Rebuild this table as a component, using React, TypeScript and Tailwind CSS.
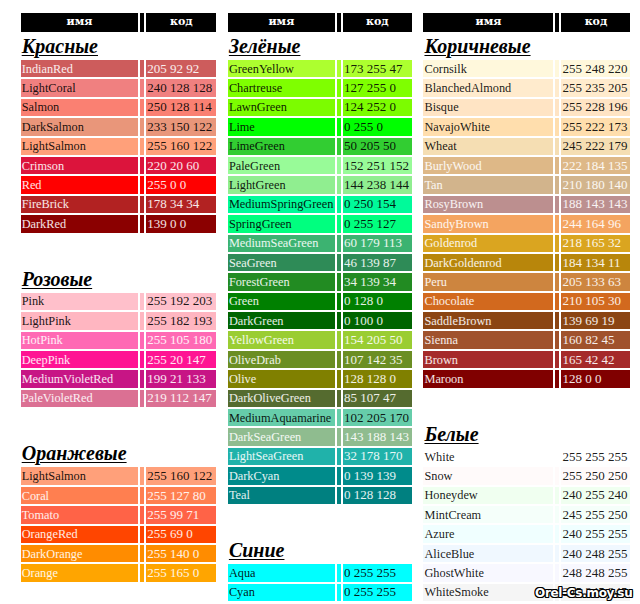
import React from "react";

type Row = [string, string, string, boolean]; // name, code, bg, lightText

const reds: Row[] = [
  ["IndianRed", "205 92 92", "rgb(205,92,92)", true],
  ["LightCoral", "240 128 128", "rgb(240,128,128)", false],
  ["Salmon", "250 128 114", "rgb(250,128,114)", false],
  ["DarkSalmon", "233 150 122", "rgb(233,150,122)", false],
  ["LightSalmon", "255 160 122", "rgb(255,160,122)", false],
  ["Crimson", "220 20 60", "rgb(220,20,60)", true],
  ["Red", "255 0 0", "rgb(255,0,0)", true],
  ["FireBrick", "178 34 34", "rgb(178,34,34)", true],
  ["DarkRed", "139 0 0", "rgb(139,0,0)", true],
];

const pinks: Row[] = [
  ["Pink", "255 192 203", "rgb(255,192,203)", false],
  ["LightPink", "255 182 193", "rgb(255,182,193)", false],
  ["HotPink", "255 105 180", "rgb(255,105,180)", true],
  ["DeepPink", "255 20 147", "rgb(255,20,147)", true],
  ["MediumVioletRed", "199 21 133", "rgb(199,21,133)", true],
  ["PaleVioletRed", "219 112 147", "rgb(219,112,147)", true],
];

const oranges: Row[] = [
  ["LightSalmon", "255 160 122", "rgb(255,160,122)", false],
  ["Coral", "255 127 80", "rgb(255,127,80)", true],
  ["Tomato", "255 99 71", "rgb(255,99,71)", true],
  ["OrangeRed", "255 69 0", "rgb(255,69,0)", true],
  ["DarkOrange", "255 140 0", "rgb(255,140,0)", true],
  ["Orange", "255 165 0", "rgb(255,165,0)", true],
];

const greens: Row[] = [
  ["GreenYellow", "173 255 47", "rgb(173,255,47)", false],
  ["Chartreuse", "127 255 0", "rgb(127,255,0)", false],
  ["LawnGreen", "124 252 0", "rgb(124,252,0)", false],
  ["Lime", "0 255 0", "rgb(0,255,0)", false],
  ["LimeGreen", "50 205 50", "rgb(50,205,50)", false],
  ["PaleGreen", "152 251 152", "rgb(152,251,152)", false],
  ["LightGreen", "144 238 144", "rgb(144,238,144)", false],
  ["MediumSpringGreen", "0 250 154", "rgb(0,250,154)", false],
  ["SpringGreen", "0 255 127", "rgb(0,255,127)", false],
  ["MediumSeaGreen", "60 179 113", "rgb(60,179,113)", true],
  ["SeaGreen", "46 139 87", "rgb(46,139,87)", true],
  ["ForestGreen", "34 139 34", "rgb(34,139,34)", true],
  ["Green", "0 128 0", "rgb(0,128,0)", true],
  ["DarkGreen", "0 100 0", "rgb(0,100,0)", true],
  ["YellowGreen", "154 205 50", "rgb(154,205,50)", true],
  ["OliveDrab", "107 142 35", "rgb(107,142,35)", true],
  ["Olive", "128 128 0", "rgb(128,128,0)", true],
  ["DarkOliveGreen", "85 107 47", "rgb(85,107,47)", true],
  ["MediumAquamarine", "102 205 170", "rgb(102,205,170)", false],
  ["DarkSeaGreen", "143 188 143", "rgb(143,188,143)", true],
  ["LightSeaGreen", "32 178 170", "rgb(32,178,170)", true],
  ["DarkCyan", "0 139 139", "rgb(0,139,139)", true],
  ["Teal", "0 128 128", "rgb(0,128,128)", true],
];

const blues: Row[] = [
  ["Aqua", "0 255 255", "rgb(0,255,255)", false],
  ["Cyan", "0 255 255", "rgb(0,255,255)", false],
];

const browns: Row[] = [
  ["Cornsilk", "255 248 220", "rgb(255,248,220)", false],
  ["BlanchedAlmond", "255 235 205", "rgb(255,235,205)", false],
  ["Bisque", "255 228 196", "rgb(255,228,196)", false],
  ["NavajoWhite", "255 222 173", "rgb(255,222,173)", false],
  ["Wheat", "245 222 179", "rgb(245,222,179)", false],
  ["BurlyWood", "222 184 135", "rgb(222,184,135)", true],
  ["Tan", "210 180 140", "rgb(210,180,140)", true],
  ["RosyBrown", "188 143 143", "rgb(188,143,143)", true],
  ["SandyBrown", "244 164 96", "rgb(244,164,96)", true],
  ["Goldenrod", "218 165 32", "rgb(218,165,32)", true],
  ["DarkGoldenrod", "184 134 11", "rgb(184,134,11)", true],
  ["Peru", "205 133 63", "rgb(205,133,63)", true],
  ["Chocolate", "210 105 30", "rgb(210,105,30)", true],
  ["SaddleBrown", "139 69 19", "rgb(139,69,19)", true],
  ["Sienna", "160 82 45", "rgb(160,82,45)", true],
  ["Brown", "165 42 42", "rgb(165,42,42)", true],
  ["Maroon", "128 0 0", "rgb(128,0,0)", true],
];

const whites: Row[] = [
  ["White", "255 255 255", "rgb(255,255,255)", false],
  ["Snow", "255 250 250", "rgb(255,250,250)", false],
  ["Honeydew", "240 255 240", "rgb(240,255,240)", false],
  ["MintCream", "245 255 250", "rgb(245,255,250)", false],
  ["Azure", "240 255 255", "rgb(240,255,255)", false],
  ["AliceBlue", "240 248 255", "rgb(240,248,255)", false],
  ["GhostWhite", "248 248 255", "rgb(248,248,255)", false],
  ["WhiteSmoke", "245 245 245", "rgb(245,245,245)", false],
];

type ColDef = { name: string; code: string };

function Header({ w }: { w: ColDef }) {
  return (
    <div className="flex h-[18.4px] gap-[2px] [font-family:DejaVu_Serif,serif]">
      <div className={`${w.name} bg-black flex items-center justify-center text-white text-[11px] font-bold`}>
        имя
      </div>
      <div className="w-[4px] bg-black" />
      <div className={`${w.code} bg-black flex items-center justify-center text-white text-[11px] font-bold`}>
        код
      </div>
    </div>
  );
}

function Section({ title, rows, w, first }: { title: string; rows: Row[]; w: ColDef; first?: boolean }) {
  return (
    <div className={first ? "" : "mt-[32px]"}>
      <div className="h-[28.3px] flex items-end pb-[3px] pl-[1px]">
        <span className="text-[20px] leading-[22px] font-bold italic underline decoration-1 underline-offset-[2px] text-black">
          {title}
        </span>
      </div>
      <div className="flex flex-col gap-[2px]">
        {rows.map(([n, c, bg, light], i) => {
          const tc = light ? "text-white/90" : "text-black/90";
          return (
            <div key={i} className="flex h-[17.4px] gap-[2px] leading-[16px]">
              <div className={`${w.name} ${tc} text-[12.3px] pl-[1px] flex items-center whitespace-nowrap overflow-hidden`} style={{ backgroundColor: bg }}>
                {n}
              </div>
              <div className="w-[4px]" style={{ backgroundColor: bg }} />
              <div className={`${w.code} ${tc} text-[13px] pl-[1px] flex items-center whitespace-nowrap overflow-hidden`} style={{ backgroundColor: bg }}>
                {c}
              </div>
            </div>
          );
        })}
      </div>
    </div>
  );
}

export default function App() {
  const w1: ColDef = { name: "w-[117.6px]", code: "w-[70px]" };
  const w2: ColDef = { name: "w-[107px]", code: "w-[69px]" };
  const w3: ColDef = { name: "w-[130px]", code: "w-[69px]" };
  return (
    <div className="relative w-[640px] h-[604px] overflow-hidden bg-white [font-family:Liberation_Serif,serif]">
      <div className="flex pt-[13.3px] pl-[20.7px] gap-[11.6px]">
        <div className="flex flex-col w-[195.6px]">
          <Header w={w1} />
          <Section title="Красные" rows={reds} w={w1} first />
          <Section title="Розовые" rows={pinks} w={w1} />
          <Section title="Оранжевые" rows={oranges} w={w1} />
        </div>
        <div className="flex flex-col w-[184px]">
          <Header w={w2} />
          <Section title="Зелёные" rows={greens} w={w2} first />
          <Section title="Синие" rows={blues} w={w2} />
        </div>
        <div className="flex flex-col w-[207px]">
          <Header w={w3} />
          <Section title="Коричневые" rows={browns} w={w3} first />
          <Section title="Белые" rows={whites} w={w3} />
        </div>
      </div>
      <div className="absolute left-[535px] top-[585px] text-[12px] leading-[16px] font-bold text-white tracking-[-0.3px] [font-family:DejaVu_Sans,sans-serif] [text-shadow:1px_0_0_#000,-1px_0_0_#000,0_1px_0_#000,0_-1px_0_#000,1px_1px_0_#000,-1px_-1px_0_#000,1px_-1px_0_#000,-1px_1px_0_#000]">
        Orel-Cs.moy.su
      </div>
    </div>
  );
}
